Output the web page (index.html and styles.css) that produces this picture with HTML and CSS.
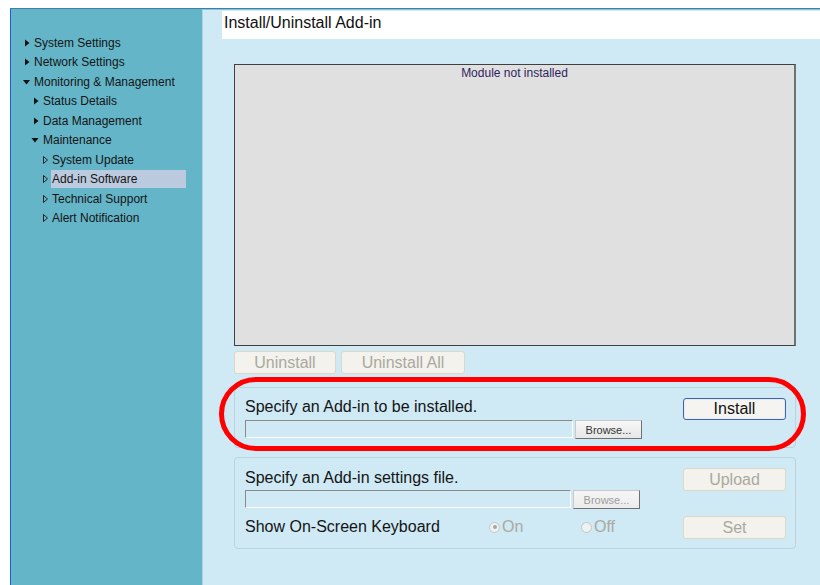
FILE: index.html
```html
<!DOCTYPE html>
<html lang="en">
<head>
<meta charset="utf-8">
<title>Install/Uninstall Add-in</title>
<link rel="stylesheet" href="styles.css">
</head>
<body>
<div class="frame">
  <nav class="sidebar">
    <ul class="tree">
      <li class="node l1"><svg class="tri" viewBox="0 0 10 10"><path d="M1 1.5L5.5 5L1 8.5Z"/></svg><span class="label">System Settings</span></li>
      <li class="node l1"><svg class="tri" viewBox="0 0 10 10"><path d="M1 1.5L5.5 5L1 8.5Z"/></svg><span class="label">Network Settings</span></li>
      <li class="node l1"><svg class="tri" viewBox="0 0 10 10"><path d="M-1 3L6 3L2.5 7.5Z"/></svg><span class="label">Monitoring &amp; Management</span></li>
      <li class="node l2"><svg class="tri" viewBox="0 0 10 10"><path d="M1 1.5L5.5 5L1 8.5Z"/></svg><span class="label">Status Details</span></li>
      <li class="node l2"><svg class="tri" viewBox="0 0 10 10"><path d="M1 1.5L5.5 5L1 8.5Z"/></svg><span class="label">Data Management</span></li>
      <li class="node l2"><svg class="tri" viewBox="0 0 10 10"><path d="M-1.5 3L5.5 3L2 7.5Z"/></svg><span class="label">Maintenance</span></li>
      <li class="node l3"><svg class="tri open" viewBox="0 0 10 10"><path d="M1.5 1.5L5.5 5L1.5 8.5Z"/></svg><span class="label">System Update</span></li>
      <li class="node l3 active"><svg class="tri open" viewBox="0 0 10 10"><path d="M1.5 1.5L5.5 5L1.5 8.5Z"/></svg><span class="label">Add-in Software</span></li>
      <li class="node l3"><svg class="tri open" viewBox="0 0 10 10"><path d="M1.5 1.5L5.5 5L1.5 8.5Z"/></svg><span class="label">Technical Support</span></li>
      <li class="node l3"><svg class="tri open" viewBox="0 0 10 10"><path d="M1.5 1.5L5.5 5L1.5 8.5Z"/></svg><span class="label">Alert Notification</span></li>
    </ul>
  </nav>

  <main class="main">
    <div class="title-bar">Install/Uninstall Add-in</div>

    <div class="content">
      <div class="module-list">
        <p class="module-empty">Module not installed</p>
      </div>

      <div class="list-actions">
        <button class="btn btn-disabled btn-uninstall" disabled>Uninstall</button>
        <button class="btn btn-disabled btn-uninstall-all" disabled>Uninstall All</button>
      </div>

      <section class="group group-install">
        <div class="group-label">Specify an Add-in to be installed.</div>
        <div class="file-row">
          <span class="file-input wide"></span>
          <button class="browse">Browse...</button>
        </div>
        <button class="btn btn-primary btn-side">Install</button>
        <span class="callout"></span>
      </section>

      <section class="group group-settings">
        <div class="group-label">Specify an Add-in settings file.</div>
        <div class="file-row">
          <span class="file-input"></span>
          <button class="browse browse-disabled" disabled>Browse...</button>
        </div>
        <button class="btn btn-disabled btn-side btn-upload" disabled>Upload</button>
        <div class="kb-row">
          <span class="kb-label">Show On-Screen Keyboard</span>
          <span class="radio-opt opt-on"><span class="radio checked"></span>On</span>
          <span class="radio-opt"><span class="radio"></span>Off</span>
        </div>
        <button class="btn btn-disabled btn-side btn-set" disabled>Set</button>
      </section>
    </div>
  </main>
</div>
</body>
</html>
```

FILE: styles.css
```css
html, body {
  margin: 0;
  height: 100%;
}

body {
  background: #ffffff;
  font-family: "Liberation Sans", Arial, sans-serif;
  padding: 8px 0 0 10px;
  box-sizing: border-box;
  overflow: hidden;
}

.frame {
  display: flex;
  height: 577px;
  border-top: 1px solid #3f7ea6;
}

/* ---------- navigation tree ---------- */
.sidebar {
  width: 192px;
  flex: none;
  box-sizing: border-box;
  background: #64b5c8;
  border-left: 1px solid #1d5ee6;
  padding: 24px 16px 0 0;
}

.tree {
  list-style: none;
  margin: 0;
  padding: 0;
}

.node {
  display: flex;
  align-items: center;
  height: 19.5px;
  font-size: 12px;
  color: #141414;
}

.l1 { padding-left: 13px; }
.l2 { padding-left: 22px; }
.l3 { padding-left: 31px; }

.tri {
  width: 10px;
  height: 10px;
  flex: none;
  overflow: visible;
  fill: #111;
}

.tri.open path {
  fill: none;
  stroke: #222;
  stroke-width: 1;
}

.label {
  flex: 1;
  line-height: 18px;
  white-space: nowrap;
}

.active .label {
  background: #bccae0;
  margin-left: -1px;
  padding-left: 1px;
}

/* ---------- main area ---------- */
.main {
  flex: 1;
  background: #cfe9f5;
  border-left: 1px solid #a6d6e4;
  border-top: 1px solid #86c5d6;
  padding-top: 1px;
}

.title-bar {
  margin-left: 19px;
  height: 28px;
  line-height: 24px;
  padding-left: 2px;
  background: #ffffff;
  font-size: 16px;
  color: #111;
}

.content {
  width: 562px;
  margin: 25px 0 0 31px;
}

.module-list {
  height: 282px;
  box-sizing: border-box;
  background: #e0e0e0;
  border: 1px solid #404040;
  border-right: 2px solid #6b7373;
}

.module-empty {
  margin: 0;
  padding-top: 1px;
  text-align: center;
  font-size: 12px;
  line-height: 15px;
  color: #2e1f5e;
}

.list-actions {
  display: flex;
  gap: 5px;
  margin-top: 5px;
}

/* ---------- buttons ---------- */
.btn {
  font-family: inherit;
  font-size: 16px;
  line-height: 20px;
  height: 23px;
  padding: 0;
  border-radius: 3px;
  box-sizing: border-box;
}

.btn-disabled {
  background: #f3f2ec;
  border: 1px solid #dbd7c9;
  color: #aaa9a0;
}

.btn-uninstall { width: 102px; }
.btn-uninstall-all { width: 124px; }

.btn-primary {
  background: #f5f4f0;
  border: 1px solid #3f66a5;
  box-shadow: inset 0 0 0 1px #e4e9f2;
  color: #111;
  height: 22px;
}

.btn-side {
  width: 103px;
  grid-column: 2;
  align-self: start;
}

.browse {
  width: 67px;
  height: 19px;
  margin-left: 2px;
  padding: 0;
  font-family: inherit;
  font-size: 11px;
  color: #333;
  background: linear-gradient(#f7f7f7, #e7e7e7);
  border: 1px solid;
  border-color: #c9c9c9 #707070 #707070 #c9c9c9;
  box-sizing: border-box;
}

.browse-disabled {
  color: #9c9c9c;
  background: linear-gradient(#f6f6f6, #ececec);
}

/* ---------- grouped forms ---------- */
.group {
  position: relative;
  display: grid;
  grid-template-columns: 1fr 103px;
  border: 1px solid #bed2da;
  border-radius: 4px;
  font-size: 16px;
  color: #141414;
}

.group-install {
  margin-top: 13px;
  padding: 10px 9px 9px 10px;
  grid-template-rows: 18px 22px;
}

.group-install .btn-side {
  grid-row: 1 / span 2;
}

.group-settings {
  margin-top: 9px;
  padding: 10px 9px 12px 10px;
  grid-template-rows: 20px 20px 28px;
}

.group-label {
  grid-column: 1;
  line-height: 18px;
  white-space: nowrap;
}

.group-settings .group-label {
  line-height: 20px;
}

.file-row {
  grid-column: 1;
  display: flex;
  align-items: flex-start;
  margin-top: 4px;
}

.group-settings .file-row {
  margin-top: 2px;
}

.file-input {
  width: 328px;
  height: 18px;
  box-sizing: border-box;
  border: 1px solid;
  border-color: #8a8a8a #ffffff #ffffff #8a8a8a;
}

.group-settings .file-input {
  width: 326px;
}

.btn-upload {
  grid-row: 1 / span 2;
}

.btn-set {
  grid-row: 3;
  margin-top: 8px;
}

.kb-row {
  grid-column: 1;
  grid-row: 3;
  display: flex;
  align-items: center;
  margin-top: 10px;
  height: 18px;
}

.kb-label {
  width: 244px;
  flex: none;
}

.radio-opt {
  display: flex;
  align-items: center;
  width: 92px;
  color: #aaa9a0;
}

.radio {
  width: 11px;
  height: 11px;
  margin-right: 2px;
  box-sizing: border-box;
  border: 1px solid #c4c6c6;
  border-radius: 50%;
  background: #eef2f3;
  position: relative;
}

.radio.checked::after {
  content: "";
  position: absolute;
  left: 2.5px;
  top: 2.5px;
  width: 4px;
  height: 4px;
  border-radius: 50%;
  background: #a4a6a6;
}

/* red ring drawn around the install group */
.callout {
  position: absolute;
  left: -16px;
  top: -11px;
  right: -11px;
  bottom: -4px;
  border: 5px solid #ff0000;
  border-radius: 38px;
  pointer-events: none;
}
```
